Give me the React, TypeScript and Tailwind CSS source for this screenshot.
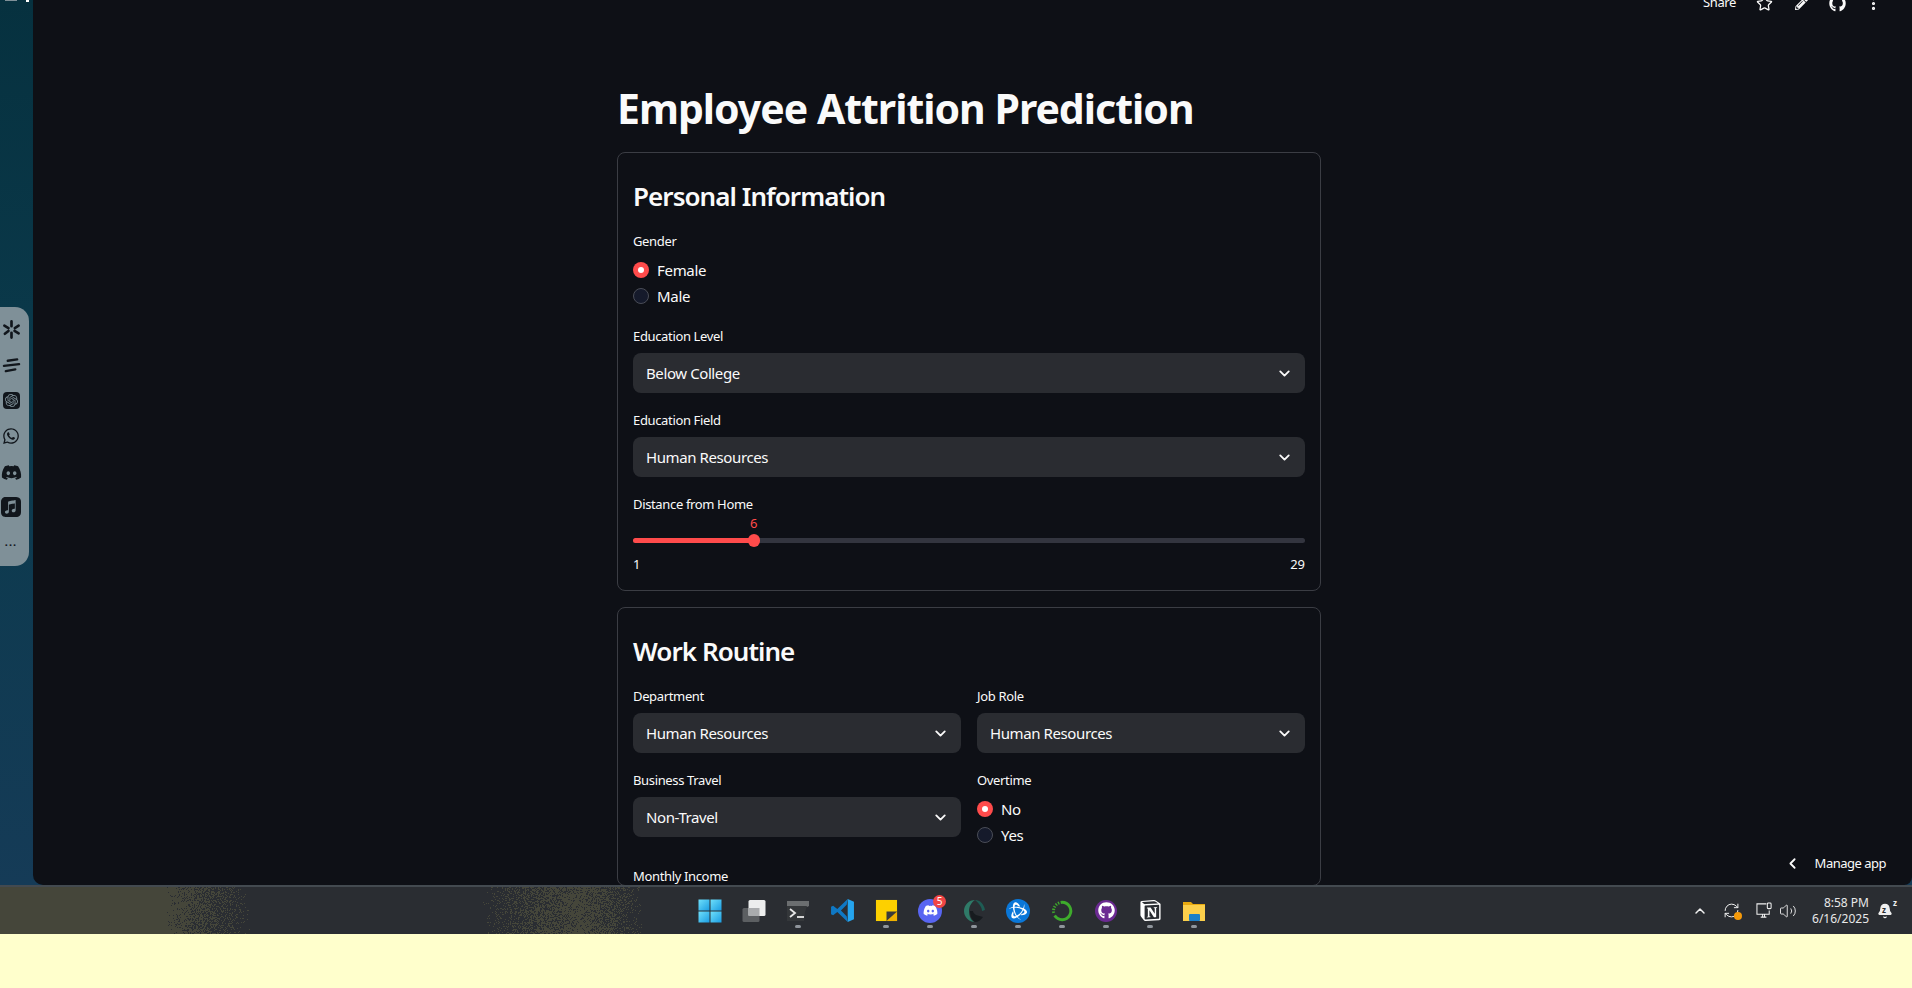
import React, { useMemo } from "react";
import { Bell, ChevronDown, ChevronLeft, ChevronUp, Star, MoreVertical, RefreshCw, Volume2 } from "lucide-react";
import { FaDiscord, FaGithub, FaWhatsapp, FaPencilAlt } from "react-icons/fa";
import { SiNotion, SiOpenai, SiApplemusic, SiBattledotnet } from "react-icons/si";

function Field({ label, children }: { label: string; children: React.ReactNode }) {
    return (
        <div>
            <div className="text-[13px] leading-[17px] tracking-[-0.35px] text-[#fafafa] mb-[8px]">{label}</div>
            {children}
        </div>
    );
}

function Select({ value }: { value: string }) {
    return (
        <div className="h-[40px] rounded-[8px] bg-[#2a2c31] flex items-center justify-between pl-[13px] pr-[12px]">
            <span className="text-[15px] tracking-[-0.4px] text-[#fafafa]">{value}</span>
            <ChevronDown className="w-[17px] h-[17px] text-[#fafafa]" strokeWidth={2.6} />
        </div>
    );
}

function Radio({ label, checked }: { label: string; checked?: boolean }) {
    return (
        <div className="flex items-center gap-[8px] h-[26px]">
            {checked ? (
                <span className="w-[16px] h-[16px] rounded-full bg-[#ff4b4b] flex items-center justify-center">
                    <span className="w-[6px] h-[6px] rounded-full bg-white" />
                </span>
            ) : (
                <span className="w-[16px] h-[16px] rounded-full bg-[#151a2b] border border-[#4a4d57]" />
            )}
            <span className="text-[15px] tracking-[-0.3px] text-[#fafafa]">{label}</span>
        </div>
    );
}

function Card({ title, children, className }: { title: string; children: React.ReactNode; className?: string }) {
    return (
        <div className={`border border-[#3b3d44] rounded-[8px] px-[15px] pt-[23px] ${className ?? ""}`}>
            <h2 className="text-[26px] leading-[40px] font-semibold tracking-[-0.95px] text-[#fafafa] mb-[17px]">{title}</h2>
            {children}
        </div>
    );
}

function DockIcons() {
    return (
        <div className="absolute left-0 top-[307px] w-[29px] h-[259px] rounded-r-[14px] bg-[#7f9098] flex flex-col items-center pt-[13px] pr-[7px] text-[#11161c]">
            <svg viewBox="0 0 20 20" className="w-[19px] h-[19px] mb-[17px] shrink-0" stroke="currentColor" strokeWidth="2.800" strokeLinecap="round">
                <path d="M10 1.500v5M10 13.500v5M2.500 6l4.300 2.500M13.200 11.500l4.300 2.500M3 14.500l3.800-3M13.500 8.500l4-2.500" />
            </svg>
            <svg viewBox="0 0 20 20" className="w-[19px] h-[19px] mb-[17px] shrink-0" stroke="currentColor" strokeWidth="2.400" strokeLinecap="round">
                <path d="M6 5l10-1.500M2 10.500l16-2M4 16l10-2" />
            </svg>
            <span className="w-[17px] h-[17px] rounded-[4px] bg-[#11161c] flex items-center justify-center mb-[18px] shrink-0">
                <SiOpenai className="w-[13px] h-[13px] text-[#7f9098]" />
            </span>
            <FaWhatsapp className="w-[18px] h-[18px] mb-[17px] shrink-0" />
            <FaDiscord className="w-[21px] h-[21px] mb-[14px] shrink-0" />
            <SiApplemusic className="w-[20px] h-[20px] mb-[21px] shrink-0" />
            <span className="text-[11px] leading-[8px] font-bold tracking-[1px]">...</span>
        </div>
    );
}

function TaskDot({ children, dot = true }: { children: React.ReactNode; dot?: boolean }) {
    return (
        <div className="relative w-[44px] h-full flex items-center justify-center">
            {children}
            {dot && <span className="absolute left-1/2 -translate-x-1/2 top-[38px] w-[6px] h-[3px] rounded-full bg-[#8f959c]" />}
        </div>
    );
}

// dithered edge of the wallpaper showing through the taskbar
function TaskbarNoise() {
    const d = useMemo(() => {
        let seed = 12345;
        const rnd = () => {
            seed = (seed * 1103515245 + 12345) & 0x7fffffff;
            return seed / 0x7fffffff;
        };
        const density = (x: number) => {
            if (x < 165) return 0;
            if (x < 250) return 1 - (x - 165) / 85;
            if (x < 482) return 0;
            if (x < 580) return ((x - 482) / 98) * 0.85;
            if (x < 643) return (1 - (x - 580) / 63) * 0.85;
            return 0;
        };
        let out = "";
        for (let x = 165; x < 643; x += 1) {
            const p = density(x);
            if (p <= 0) continue;
            for (let y = 0; y < 47; y += 1) {
                if (rnd() < p) out += `M${x} ${y}h1v1h-1z`;
            }
        }
        return out;
    }, []);
    return (
        <svg className="absolute left-0 top-0" width="650" height="47" viewBox="0 0 650 47">
            <path d={d} fill="#45463a" />
        </svg>
    );
}

function Taskbar() {
    return (
        <div className="relative h-[49px] border-t-2 border-[#434a50] bg-[#2a2d32] bg-[linear-gradient(90deg,#45463a_0px,#45463a_165px,#2a2d32_165px)] flex items-center justify-center shrink-0">
            <TaskbarNoise />
            <div className="relative flex h-full items-center -ml-[8px]">
                <TaskDot dot={false}>
                    <svg viewBox="0 0 24 24" className="w-[24px] h-[24px]">
                        <defs>
                            <linearGradient id="w" x1="0" y1="0" x2="1" y2="1"><stop offset="0" stopColor="#6fe0fb" /><stop offset="1" stopColor="#1b9de2" /></linearGradient>
                        </defs>
                        <rect x="0.500" y="0.500" width="11" height="11" fill="url(#w)" />
                        <rect x="12.500" y="0.500" width="11" height="11" fill="url(#w)" />
                        <rect x="0.500" y="12.500" width="11" height="11" fill="url(#w)" />
                        <rect x="12.500" y="12.500" width="11" height="11" fill="url(#w)" />
                    </svg>
                </TaskDot>
                <TaskDot dot={false}>
                    <svg viewBox="0 0 24 24" className="w-[24px] h-[24px]">
                        <rect x="0.500" y="9" width="17" height="14" rx="1.500" fill="#5c5f62" />
                        <rect x="6.500" y="1" width="17" height="16" rx="1.500" fill="#eceded" />
                        <rect x="6.500" y="9" width="11" height="8" fill="#a9abad" />
                    </svg>
                </TaskDot>
                <TaskDot>
                    <svg viewBox="0 0 24 24" className="w-[24px] h-[24px]">
                        <path d="M1 2h22v5l-2 1H1z" fill="#6b6e70" />
                        <path d="M1 7h20l-2 6-1 9H1z" fill="#34373a" />
                        <path d="M4 10l5 4-5 4" fill="none" stroke="#e8e8e8" strokeWidth="1.800" />
                        <path d="M11 18h7" stroke="#e8e8e8" strokeWidth="1.800" />
                    </svg>
                </TaskDot>
                <TaskDot dot={false}>
                    <svg viewBox="0 0 24 24" className="w-[25px] h-[25px]">
                        <path d="M17 1L7 10.500 3 7.500 1 8.500v7l2 1 4-3L17 23l-1-5.500L10.500 12 16 6.500z" fill="#0f78c4" />
                        <path d="M17 1l6 2.500v17L17 23z" fill="#25a4ee" />
                    </svg>
                </TaskDot>
                <TaskDot>
                    <svg viewBox="0 0 24 24" className="w-[23px] h-[23px]">
                        <rect width="22" height="22" x="1" y="1" fill="#fdd000" />
                        <path d="M12 23L23 12v11z" fill="#f0b100" />
                        <path d="M12 23v-10h11z" fill="#3a3a3a" />
                    </svg>
                </TaskDot>
                <TaskDot>
                    <span className="relative w-[24px] h-[24px] rounded-full bg-[#5865f2] flex items-center justify-center">
                        <FaDiscord className="w-[15px] h-[15px] text-white" />
                        <span className="absolute -top-[4px] -right-[4px] w-[13px] h-[13px] rounded-full bg-[#f04545] text-white text-[10px] leading-[13px] text-center">5</span>
                    </span>
                </TaskDot>
                <TaskDot>
                    <svg viewBox="0 0 24 24" className="w-[24px] h-[24px]">
                        <path d="M13 1a11 11 0 1 0 0 22c-4-1-6-6-6-11s3-9 6-11z" fill="#2f7a68" />
                        <path d="M13 1c5 0 9 4 10 10l-3 1c0-3-2-7-7-11z" fill="#1e5c54" />
                        <path d="M8 12c0 5 2 9 5 11 3 0 6-2 8-5l-7-2c-2-1-3-3-3-4z" fill="#171b1f" />
                    </svg>
                </TaskDot>
                <TaskDot>
                    <span className="w-[24px] h-[24px] rounded-full bg-[#0a77d8] flex items-center justify-center">
                        <SiBattledotnet className="w-[18px] h-[18px] text-white" />
                    </span>
                </TaskDot>
                <TaskDot>
                    <svg viewBox="0 0 24 24" className="w-[22px] h-[22px]" fill="none">
                        <path d="M12 2.500a9.500 9.500 0 1 1-8 14.500" stroke="#3eab2c" strokeWidth="3.200" />
                        <path d="M3 14a9.500 9.500 0 0 1 9-11.500" stroke="#3eab2c" strokeWidth="3.200" strokeDasharray="1.500 1.500" />
                    </svg>
                </TaskDot>
                <TaskDot>
                    <span className="w-[22px] h-[22px] rounded-full bg-[#6b2a92] flex items-center justify-center">
                        <FaGithub className="w-[17px] h-[17px] text-white" />
                    </span>
                </TaskDot>
                <TaskDot>
                    <SiNotion className="w-[21px] h-[21px] text-white" />
                </TaskDot>
                <TaskDot>
                    <svg viewBox="0 0 24 24" className="w-[24px] h-[24px]">
                        <path d="M1 3h8l2 2h12v3H1z" fill="#e8a90f" />
                        <rect x="1" y="6" width="22" height="16" fill="#fbcf4b" />
                        <rect x="7" y="15" width="11" height="7" rx="1" fill="#1a7fc9" />
                    </svg>
                </TaskDot>
            </div>

            <div className="absolute right-0 top-0 bottom-0 flex items-center text-[#f0f0f0]">
                <ChevronUp className="w-[16px] h-[16px] mr-[15px]" strokeWidth={2.2} />
                <span className="relative mr-[16px]">
                    <RefreshCw className="w-[17px] h-[17px]" strokeWidth={1.400} />
                    <span className="absolute right-[-2px] bottom-[-1px] w-[8px] h-[8px] rounded-full bg-[#f59a0a]" />
                </span>
                <svg viewBox="0 0 18 18" className="w-[17px] h-[17px] mr-[6px]" fill="none" stroke="currentColor" strokeWidth="1.100">
                    <path d="M11 2H1v11h13V9M5 16h6M7 13v3M9 13v3" />
                    <rect x="12" y="1" width="4" height="6" rx="1" />
                </svg>
                <Volume2 className="w-[18px] h-[18px] mr-[15px]" strokeWidth={1.200} />
                <div className="text-right text-[12px] leading-[16px] mr-[8px] text-[#e8e8e8]">
                    <div>8:58 PM</div>
                    <div>6/16/2025</div>
                </div>
                <span className="relative mr-[19px]">
                    <Bell className="w-[16px] h-[16px]" fill="currentColor" />
                    <span className="absolute left-[5px] top-[2px] text-[8px] leading-[10px] font-bold text-[#2a2d32]">z</span>
                    <span className="absolute -right-[4px] -top-[5px] text-[8px] leading-[10px] font-bold">z</span>
                </span>
            </div>
        </div>
    );
}

export default function App() {
    return (
        <div className="w-full h-[988px] overflow-hidden flex flex-col bg-[#ffffcc] font-['Noto_Sans',sans-serif]">
            <div className="relative h-[885px] flex shrink-0 bg-[linear-gradient(180deg,#06313f_0%,#0b3a4c_45%,#153b57_100%)]">
                <div className="w-[33px] shrink-0" />
                {/* bits of desktop icons cut off at the top edge */}
                <span className="absolute left-[5px] top-0 w-[12px] h-[1px] bg-[#7f9098]" />
                <span className="absolute left-[26px] top-0 w-[3px] h-[2px] bg-white" />
                <DockIcons />
                <main className="relative flex-1 min-w-0 bg-[#0e1016] rounded-bl-[10px] rounded-br-[8px] overflow-hidden">
                    <div className="absolute right-0 -top-[10px] flex items-center h-[26px] text-[#fafafa]">
                        <span className="text-[13px] tracking-[-0.4px] mr-[20px]">Share</span>
                        <Star className="w-[17px] h-[17px] mr-[22px]" strokeWidth={1.800} />
                        <FaPencilAlt className="w-[13px] h-[13px] mr-[21px]" />
                        <FaGithub className="w-[17px] h-[17px] mr-[19px]" />
                        <MoreVertical className="w-[17px] h-[17px] mr-[30px]" strokeWidth={2.500} />
                    </div>

                    <div className="ml-[584px] w-[704px] pt-[80px]">
                        <h1 className="text-[41px] leading-[56px] font-bold tracking-[-1px] text-[#fafafa] mb-[16px]">Employee Attrition Prediction</h1>

                        <Card title="Personal Information" className="h-[439px] mb-[16px]">
                            <Field label="Gender">
                                <div className="-mt-[1px] mb-[19px]">
                                    <Radio label="Female" checked />
                                    <Radio label="Male" />
                                </div>
                            </Field>
                            <div className="mb-[19px]">
                                <Field label="Education Level"><Select value="Below College" /></Field>
                            </div>
                            <div className="mb-[19px]">
                                <Field label="Education Field"><Select value="Human Resources" /></Field>
                            </div>
                            <div className="text-[13px] leading-[17px] tracking-[-0.35px] text-[#fafafa]">Distance from Home</div>
                            <div className="relative h-[60px]">
                                <div className="absolute left-0 right-0 top-[25px] h-[5px] rounded-full bg-[#33353f]" />
                                <div className="absolute left-0 w-[121px] top-[25px] h-[5px] rounded-full bg-[#ff4b4b]" />
                                <div className="absolute left-[115px] top-[21px] w-[12px] h-[13px] rounded-full bg-[#ff4b4b]" />
                                <span className="absolute left-[117px] top-[1px] text-[13px] leading-[18px] text-[#ff4b4b]">6</span>
                                <span className="absolute left-0 top-[42px] text-[13px] leading-[18px] text-[#fafafa]">1</span>
                                <span className="absolute right-0 top-[42px] text-[13px] leading-[18px] text-[#fafafa]">29</span>
                            </div>
                        </Card>

                        <Card title="Work Routine">
                            <div className="grid grid-cols-2 gap-x-[16px] gap-y-[19px]">
                                <Field label="Department"><Select value="Human Resources" /></Field>
                                <Field label="Job Role"><Select value="Human Resources" /></Field>
                                <Field label="Business Travel"><Select value="Non-Travel" /></Field>
                                <Field label="Overtime">
                                    <div className="-mt-[1px]">
                                        <Radio label="No" checked />
                                        <Radio label="Yes" />
                                    </div>
                                </Field>
                            </div>
                            <div className="mt-[20px] text-[13px] leading-[17px] tracking-[-0.35px] text-[#fafafa]">Monthly Income</div>
                        </Card>
                    </div>

                    <div className="absolute right-[26px] bottom-[12px] flex items-center text-[#fafafa]">
                        <ChevronLeft className="w-[17px] h-[17px] mr-[14px]" strokeWidth={2.500} />
                        <span className="text-[13px] tracking-[-0.5px]">Manage app</span>
                    </div>
                </main>
            </div>
            <Taskbar />
        </div>
    );
}
